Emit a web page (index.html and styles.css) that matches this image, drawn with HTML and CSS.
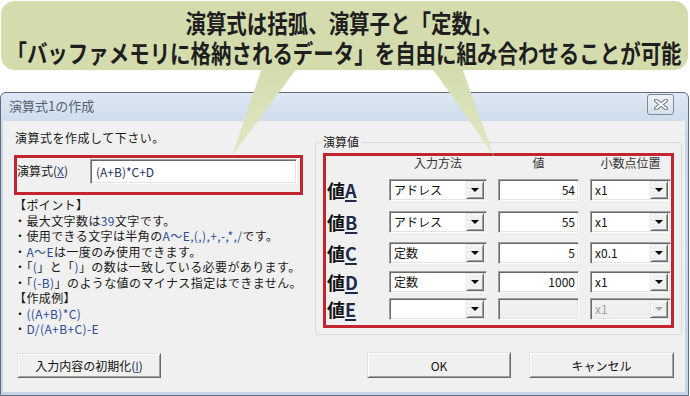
FILE: index.html
```html
<!DOCTYPE html>
<html lang="ja">
<head>
    <meta charset="UTF-8">
    <meta name="viewport" content="width=device-width, initial-scale=1.0">
    <title>演算式1の作成</title>
    <link rel="stylesheet" href="styles.css">
</head>
<body>
<div class="stage">
    <div class="bubble">
        <p class="bubbleText">演算式は括弧、演算子と「定数」、<br>「バッファメモリに格納されるデータ」を自由に組み合わせることが可能</p>
    </div>

    <div class="window">
        <div class="titlebar">
            <span class="title">演算式1の作成</span>
            <button class="close">
                <svg width="16" height="11" viewBox="0 0 16 11">
                    <path d="M3 1.5 L13 9.5 M13 1.5 L3 9.5" stroke="#6f7a86" stroke-width="4" stroke-linecap="round"/>
                    <path d="M3 1.5 L13 9.5 M13 1.5 L3 9.5" stroke="#fff" stroke-width="2" stroke-linecap="round"/>
                </svg>
            </button>
        </div>

        <div class="client">
            <div class="leftCol">
                <p class="prompt">演算式を作成して下さい。</p>

                <div class="mark exprRow">
                    <label class="exprLabel">演算式(<u>X</u>)</label>
                    <div class="field exprInput">(A+B)*C+D</div>
                </div>

                <div class="notes">
                    <p>【ポイント】</p>
                    <p>・最大文字数は<span class="asc">39</span>文字です。</p>
                    <p>・使用できる文字は半角の<span class="asc">A〜E,(,),+,-,*,/</span>です。</p>
                    <p>・<span class="asc">A〜E</span>は一度のみ使用できます。</p>
                    <p>・「<span class="asc">(</span>」と「<span class="asc">)</span>」の数は一致している必要があります。</p>
                    <p>・「<span class="asc">(-B)</span>」のような値のマイナス指定はできません。</p>
                    <p>【作成例】</p>
                    <p>・<span class="asc">((A+B)*C)</span></p>
                    <p>・<span class="asc">D/(A+B+C)-E</span></p>
                </div>

                <button class="btn resetBtn">入力内容の初期化(<u>I</u>)</button>
            </div>

            <div class="rightCol">
                <fieldset class="group">
                    <legend>演算値</legend>
                    <div class="mark valueGrid">
                        <span class="colHead"></span>
                        <span class="colHead">入力方法</span>
                        <span class="colHead">値</span>
                        <span class="colHead">小数点位置</span>

                        <span class="rowLabel">値<u>A</u></span>
                        <div class="field combo"><span class="val">アドレス</span><span class="drop"></span></div>
                        <div class="field num">54</div>
                        <div class="field combo"><span class="val">x1</span><span class="drop"></span></div>

                        <span class="rowLabel">値<u>B</u></span>
                        <div class="field combo"><span class="val">アドレス</span><span class="drop"></span></div>
                        <div class="field num">55</div>
                        <div class="field combo"><span class="val">x1</span><span class="drop"></span></div>

                        <span class="rowLabel">値<u>C</u></span>
                        <div class="field combo"><span class="val">定数</span><span class="drop"></span></div>
                        <div class="field num">5</div>
                        <div class="field combo"><span class="val">x0.1</span><span class="drop"></span></div>

                        <span class="rowLabel">値<u>D</u></span>
                        <div class="field combo"><span class="val">定数</span><span class="drop"></span></div>
                        <div class="field num">1000</div>
                        <div class="field combo"><span class="val">x1</span><span class="drop"></span></div>

                        <span class="rowLabel">値<u>E</u></span>
                        <div class="field combo"><span class="val"></span><span class="drop"></span></div>
                        <div class="field num disabled"></div>
                        <div class="field combo disabled"><span class="val">x1</span><span class="drop"></span></div>
                    </div>
                </fieldset>

                <div class="actions">
                    <button class="btn okBtn">OK</button>
                    <button class="btn cancelBtn">キャンセル</button>
                </div>
            </div>
        </div>
    </div>

    <!-- callout tails drawn over the dialog -->
    <svg class="tails" width="690" height="396" viewBox="0 0 690 396">
        <defs>
            <linearGradient id="tailFill" x1="0" y1="0" x2="0" y2="1">
                <stop offset="0" stop-color="#d4dcae"/>
                <stop offset="1" stop-color="#e2e8c6"/>
            </linearGradient>
        </defs>
        <polygon points="262,68 297,68 232,156" fill="url(#tailFill)"/>
        <polygon points="432,68 462,68 494,156" fill="url(#tailFill)"/>
    </svg>
</div>
</body>
</html>
```

FILE: styles.css
```css
body {
    margin: 0;
    background-color: #fff;
    font-family: "Noto Sans CJK JP", "Noto Sans", sans-serif;
    color: #1a1a1a;
}

p {
    margin: 0;
}

.stage {
    position: relative;
    width: 690px;
    height: 396px;
    overflow: hidden;
}

/* speech bubble */
.bubble {
    height: 69px;
    margin: 1px 2px 0 1px;
    padding-top: 7px;
    box-sizing: border-box;
    background-color: #d4dcae;
    border-radius: 14px;
}

.bubbleText {
    width: 820px;
    margin-left: -67px;
    text-align: center;
    white-space: nowrap;
    font-size: 24.5px;
    line-height: 30px;
    font-weight: 700;
    color: #1e1e1e;
    transform: scaleX(0.835);
}

.tails {
    position: absolute;
    top: 0;
    left: 0;
    pointer-events: none;
}

/* window frame */
.window {
    width: 689px;
    height: 304px;
    margin-top: 22px;
    box-sizing: border-box;
    border: 1px solid #5f6d7b;
    border-radius: 6px 6px 0 0;
    padding: 0 3px 3px 2px;
    background: linear-gradient(#dde8f4, #c8d8ea 40px, #c4d5e8);
    display: flex;
    flex-direction: column;
}

.titlebar {
    height: 28px;
    display: flex;
    justify-content: space-between;
    align-items: flex-start;
}

.title {
    margin: 4px 0 0 6px;
    font-size: 13px;
    line-height: 18px;
    color: #56636f;
}

.close {
    width: 27px;
    height: 21px;
    margin: 1px 11px 0 0;
    padding: 0;
    border: 1px solid #7d8b99;
    border-radius: 3px;
    background: linear-gradient(#edf2f8, #d6e0eb);
    display: flex;
    align-items: center;
    justify-content: center;
}

.client {
    flex: 1;
    display: flex;
    background-color: #f0f0f0;
    font-size: 12px;
}

.leftCol {
    width: 312px;
    padding-left: 11px;
    box-sizing: border-box;
}

.prompt {
    margin: 9px 0 0 1px;
    line-height: 16px;
    letter-spacing: 0.5px;
}

.mark {
    border: 3px solid #c22530;
    box-sizing: border-box;
}

.exprRow {
    width: 289px;
    height: 40px;
    margin-top: 9px;
    padding-top: 1px;
    display: flex;
    align-items: flex-start;
}

.exprLabel {
    width: 73px;
    line-height: 23px;
}

.exprLabel u, .resetBtn u {
    color: #2b4a8f;
}

/* sunken edit / combo fields */
.field {
    box-sizing: border-box;
    height: 22px;
    background-color: #fff;
    border: 1px solid;
    border-color: #a0a0a0 #fff #fff #a0a0a0;
    box-shadow: inset 1px 1px 0 #696969, inset -1px -1px 0 #e3e3e3;
    line-height: 20px;
    color: #111;
}

.exprInput {
    width: 207px;
    height: 25px;
    line-height: 23px;
    padding-left: 5px;
    color: #1f2f5c;
}

.notes {
    margin-top: 2px;
    line-height: 15.5px;
    letter-spacing: 0.4px;
}

.asc {
    color: #2c4c96;
}

.btn {
    box-sizing: border-box;
    height: 26px;
    padding: 0;
    font-family: inherit;
    font-size: 12px;
    color: #111;
    background-color: #f0f0f0;
    border: 1px solid;
    border-color: #e3e3e3 #696969 #696969 #e3e3e3;
    box-shadow: inset 1px 1px 0 #fff, inset -1px -1px 0 #a0a0a0;
}

.resetBtn {
    width: 144px;
    height: 25px;
    margin: 16px 0 0 3px;
}

.rightCol {
    flex: 1;
}

.group {
    width: 358px;
    margin: 13px 0 0 0;
    padding: 3px 7px 6px;
    box-sizing: border-box;
    border: 1px solid #d3dce2;
    border-radius: 3px;
}

.group legend {
    margin-left: -2px;
    padding: 0 2px;
    line-height: 16px;
}

.valueGrid {
    height: 175px;
    display: grid;
    grid-template-columns: 52px 98px 81px 81px;
    grid-template-rows: 23px 32px 31px 29px 27px 22px;
    column-gap: 11px;
    align-items: start;
}

.colHead {
    text-align: center;
    line-height: 13px;
    color: #333;
}

.rowLabel {
    padding-left: 1px;
    font-size: 18px;
    font-weight: 700;
    line-height: 22px;
    color: #111;
}

.rowLabel u {
    color: #1d2a4c;
    text-decoration-thickness: 2px;
    text-underline-offset: 2px;
}

.combo {
    display: flex;
    padding: 1px 2px 1px 1px;
}

.combo .val {
    flex: 1;
    padding-left: 3px;
    line-height: 18px;
}

.drop {
    width: 18px;
    box-sizing: border-box;
    background-color: #f0f0f0;
    border: 1px solid;
    border-color: #e3e3e3 #696969 #696969 #e3e3e3;
    box-shadow: inset 1px 1px 0 #fff, inset -1px -1px 0 #a0a0a0;
    display: flex;
    align-items: center;
    justify-content: center;
}

.drop::after {
    content: "";
    border-top: 4px solid #000;
    border-left: 4px solid transparent;
    border-right: 4px solid transparent;
}

.num {
    text-align: right;
    padding-right: 3px;
}

.disabled {
    background-color: #f0f0f0;
}

.combo.disabled .val {
    color: #a0a0a0;
}

.combo.disabled .drop::after {
    border-top-color: #a8a8a8;
}

.actions {
    margin-top: 17px;
    padding-left: 52px;
    display: flex;
    gap: 18px;
}

.okBtn {
    width: 144px;
}

.cancelBtn {
    width: 145px;
}
```
